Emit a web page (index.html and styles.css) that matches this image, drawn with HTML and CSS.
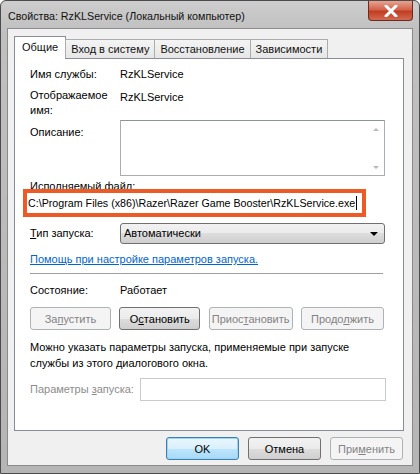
FILE: index.html
```html
<!DOCTYPE html>
<html lang="ru">
<head>
    <meta charset="UTF-8">
    <title>Свойства: RzKLService</title>
    <link rel="stylesheet" href="styles.css">
</head>
<body>
    <div class="window">
        <div class="titlebar">
            <span class="title">Свойства: RzKLService (Локальный компьютер)</span>
            <div class="close">
                <svg width="14" height="12" viewBox="0 0 14 12"><path d="M2 1 L12 11 M12 1 L2 11" stroke="#fff" stroke-width="3" stroke-linecap="round"/></svg>
            </div>
        </div>
        <div class="client">
            <div class="tabs">
                <div class="tab active">Общие</div>
                <div class="tab">Вход в систему</div>
                <div class="tab">Восстановление</div>
                <div class="tab">Зависимости</div>
            </div>
            <div class="panel">
                <div class="row r-name">
                    <span class="label">Имя службы:</span>
                    <span class="value">RzKLService</span>
                </div>
                <div class="row r-display">
                    <span class="label">Отображаемое<br>имя:</span>
                    <span class="value">RzKLService</span>
                </div>
                <div class="row r-desc">
                    <span class="label">Описание:</span>
                    <div class="textarea">
                        <div class="scroll">
                            <span class="arr up"></span>
                            <span class="arr down"></span>
                        </div>
                    </div>
                </div>
                <div class="exe-label">Исполняемый файл:</div>
                <div class="exe">C:\Program Files (x86)\Razer\Razer Game Booster\RzKLService.exe<span class="caret"></span></div>
                <div class="row r-type">
                    <span class="label"><u>Т</u>ип запуска:</span>
                    <div class="select">
                        <span>Автоматически</span>
                        <span class="drop"></span>
                    </div>
                </div>
                <div class="help"><a href="#">Помощь при настройке параметров запуска.</a></div>
                <div class="sep"></div>
                <div class="row r-state">
                    <span class="label">Состояние:</span>
                    <span class="value">Работает</span>
                </div>
                <div class="actions">
                    <button class="btn off">За<u>п</u>устить</button>
                    <button class="btn">О<u>с</u>тановить</button>
                    <button class="btn off">Приос<u>т</u>ановить</button>
                    <button class="btn off">Продо<u>л</u>жить</button>
                </div>
                <p class="note">Можно указать параметры запуска, применяемые при запуске<br>службы из этого диалогового окна.</p>
                <div class="row r-param">
                    <span class="label off">Параметры <u>з</u>апуска:</span>
                    <div class="input"></div>
                </div>
            </div>
            <div class="footer">
                <button class="btn ok">OK</button>
                <button class="btn">Отмена</button>
                <button class="btn off">При<u>м</u>енить</button>
            </div>
        </div>
    </div>
</body>
</html>
```

FILE: styles.css
```css
* { box-sizing: border-box; }
body { margin: 0; font-family: "Liberation Sans", Arial, sans-serif; font-size: 11px; line-height: 15px; color: #000; background: #fff; }

.window { width: 420px; height: 474px; border: 1px solid #4b4b4b; border-radius: 6px 6px 0 0; background: linear-gradient(#cdcdcd, #c0c0c0 30px, #b5b5b5); padding: 0 6px 7px 6px; display: flex; flex-direction: column; position: relative; }
.titlebar { height: 27px; display: flex; align-items: center; padding: 3px 0 0 1px; }
.title { font-size: 10.7px; color: #111; }
.close { position: absolute; top: 0; right: 6px; width: 45px; height: 20px; border: 1px solid #6b2b22; border-top: none; border-radius: 0 0 4px 4px; background: linear-gradient(#e7a491, #d2644c 45%, #c23e23 55%, #d16a4f); display: flex; align-items: center; justify-content: center; }
.client { flex: 1; background: #f0f0f0; border: 1px solid #8a8a8a; padding: 7px 8px 0 6px; }

.tabs { display: flex; height: 22px; align-items: flex-end; position: relative; z-index: 1; }
.tab { height: 19px; padding: 0 5px; border: 1px solid #acacac; border-bottom: none; background: linear-gradient(#f4f4f4, #e6e6e6); margin-right: -1px; line-height: 18px; color: #111; }
.tab.active { background: #fff; border-color: #898c95; padding: 0 7px; line-height: 20px; margin-bottom: -1px; height: 23px; }

.panel { height: 373px; background: #fff; border: 1px solid #898c95; padding: 0 18px 0 15px; }
.row { display: grid; grid-template-columns: 90px 1fr; align-items: start; }
.r-name { margin-top: 8px; }
.r-display { margin-top: 6px; }
.r-display .value { margin-top: 2px; }
.r-desc { margin-top: 2px; }
.r-desc .label { margin-top: 5px; }
.textarea { height: 56px; border: 1px solid #abadb3; border-top-color: #8f9296; background: #fff; display: flex; justify-content: flex-end; }
.scroll { width: 17px; display: flex; flex-direction: column; justify-content: space-between; align-items: center; padding: 7px 0 6px; }
.arr { width: 0; height: 0; border-left: 3px solid transparent; border-right: 3px solid transparent; }
.arr.up { border-bottom: 3px solid #b8b8b8; }
.arr.down { border-top: 3px solid #b8b8b8; }

.exe-label { margin-top: 3px; height: 10px; }
.exe { margin-left: -7px; width: 343px; height: 28px; border: 4px solid #ee5a25; background: #fff; line-height: 20px; padding-left: 1px; white-space: nowrap; font-size: 10.7px; position: relative; }
.caret { display: inline-block; width: 1px; height: 14px; background: #000; vertical-align: -3px; margin-left: 1px; }

.r-type { margin-top: 6px; align-items: center; height: 21px; }
.select { height: 21px; border: 1px solid #707070; border-radius: 3px; background: linear-gradient(#f2f2f2, #ebebeb 50%, #dddddd 50%, #cfcfcf); display: flex; align-items: center; justify-content: space-between; padding: 0 6px 0 3px; }
.drop { width: 0; height: 0; border-left: 4px solid transparent; border-right: 4px solid transparent; border-top: 4px solid #000; }

.help { margin-top: 8px; height: 15px; }
.help a { color: #0066cc; text-decoration: underline; }
.sep { height: 1px; background: #a0a0a0; margin-top: 6px; margin-right: 2px; }

.r-state { margin-top: 9px; }
.actions { display: flex; justify-content: space-between; margin-top: 9px; margin-right: 1px; }
.btn { font-family: inherit; font-size: 11px; height: 23px; width: 81px; padding: 0; border: 1px solid #707070; border-radius: 3px; background: linear-gradient(#f2f2f2, #ebebeb 50%, #dddddd 50%, #cfcfcf); color: #000; }
.btn.off { border-color: #adb2b5; background: #f4f4f4; color: #838383; }
.actions .btn:nth-child(3) { width: 84px; }
.actions .btn:nth-child(4) { width: 83px; }

.note { margin: 9px 0 0; line-height: 16px; }
.r-param { margin-top: 7px; grid-template-columns: 110px 1fr; align-items: center; margin-right: -1px; }
.label.off { color: #8c8c8c; white-space: nowrap; }
.input { height: 23px; border: 1px solid #c9cacc; background: #fff; }

.footer { display: flex; justify-content: flex-end; gap: 9px; margin-top: 6px; margin-right: 1px; }
.footer .btn { width: 73px; }
.footer .ok { border-color: #3c7fb1; background: linear-gradient(#eaf6fd, #d9f0fc 50%, #bee6fd 50%, #a7d9f5); box-shadow: inset 0 0 0 1px #9fd5f3; }
```
